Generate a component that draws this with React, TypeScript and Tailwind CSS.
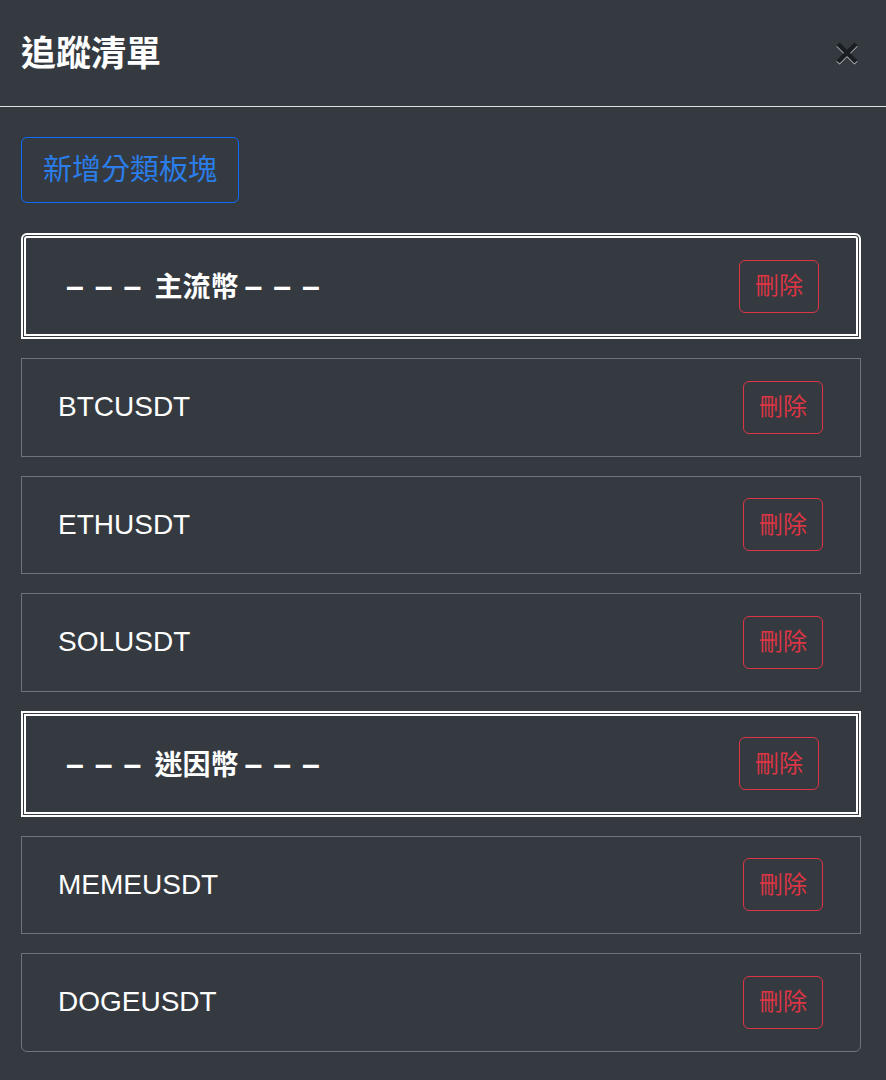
import React from "react";

type Row = { kind: "cat" | "item"; label: string };

const rows: Row[] = [
  { kind: "cat", label: "主流幣" },
  { kind: "item", label: "BTCUSDT" },
  { kind: "item", label: "ETHUSDT" },
  { kind: "item", label: "SOLUSDT" },
  { kind: "cat", label: "迷因幣" },
  { kind: "item", label: "MEMEUSDT" },
  { kind: "item", label: "DOGEUSDT" },
];

function DeleteBtn() {
  return (
    <button className="w-[80px] h-[53px] shrink-0 rounded-[6px] border border-[#dc3545] text-[#dc3545] text-[24px] leading-none flex items-center justify-center">
      刪除
    </button>
  );
}

export default function App() {
  return (
    <div
      className="w-[886px] h-[1080px] bg-[#343a40] overflow-hidden"
      style={{ fontFamily: '"Liberation Sans", "Noto Sans CJK TC", sans-serif' }}
    >
      <div className="h-[107px] border-b border-[#dee2e6] flex items-center justify-between pl-[21px] pr-[26px]">
        <h1 className="text-[35px] font-bold text-white leading-none pt-[1px]">追蹤清單</h1>
        <button className="w-[26px] h-[26px] flex items-center justify-center">
          <svg width="26" height="26" viewBox="0 0 26 26">
            <path d="M4 5 L22 23 M22 5 L4 23" stroke="#c8ccd0" strokeWidth="4.5" />
            <path d="M4 4 L22 22 M22 4 L4 22" stroke="#1a1d21" strokeWidth="4.5" />
          </svg>
        </button>
      </div>
      <div className="pl-[21px] pr-[25px] pt-[30px]">
        <button className="h-[66px] px-[21px] rounded-[6px] border border-[#0d6efd] text-[#2b7de9] text-[29px] leading-none flex items-center">
          新增分類板塊
        </button>
        <div className="mt-[30px] flex flex-col gap-[19px]">
          {rows.map((r, i) => {
            const first = i === 0;
            const last = i === rows.length - 1;
            const round = first ? "rounded-t-[6px]" : last ? "rounded-b-[6px]" : "";
            if (r.kind === "cat") {
              return (
                <div
                  key={i}
                  className={`h-[106px] border-[5px] border-double border-white flex items-center justify-between pl-[40px] pr-[37px] ${round}`}
                >
                  <span className="text-white text-[28px] font-bold leading-none whitespace-pre flex items-baseline">
                    <span className="text-[32px] tracking-[11px]">–––</span>
                    <span className="ml-[2px]">{r.label}</span>
                    <span className="ml-[6px] text-[32px] tracking-[11px]">–––</span>
                  </span>
                  <DeleteBtn />
                </div>
              );
            }
            return (
              <div
                key={i}
                className={`h-[98.5px] border border-[#6c757d] flex items-center justify-between pl-[36px] pr-[37px] ${round}`}
              >
                <span className="text-white text-[28px] leading-none">{r.label}</span>
                <DeleteBtn />
              </div>
            );
          })}
        </div>
      </div>
    </div>
  );
}
